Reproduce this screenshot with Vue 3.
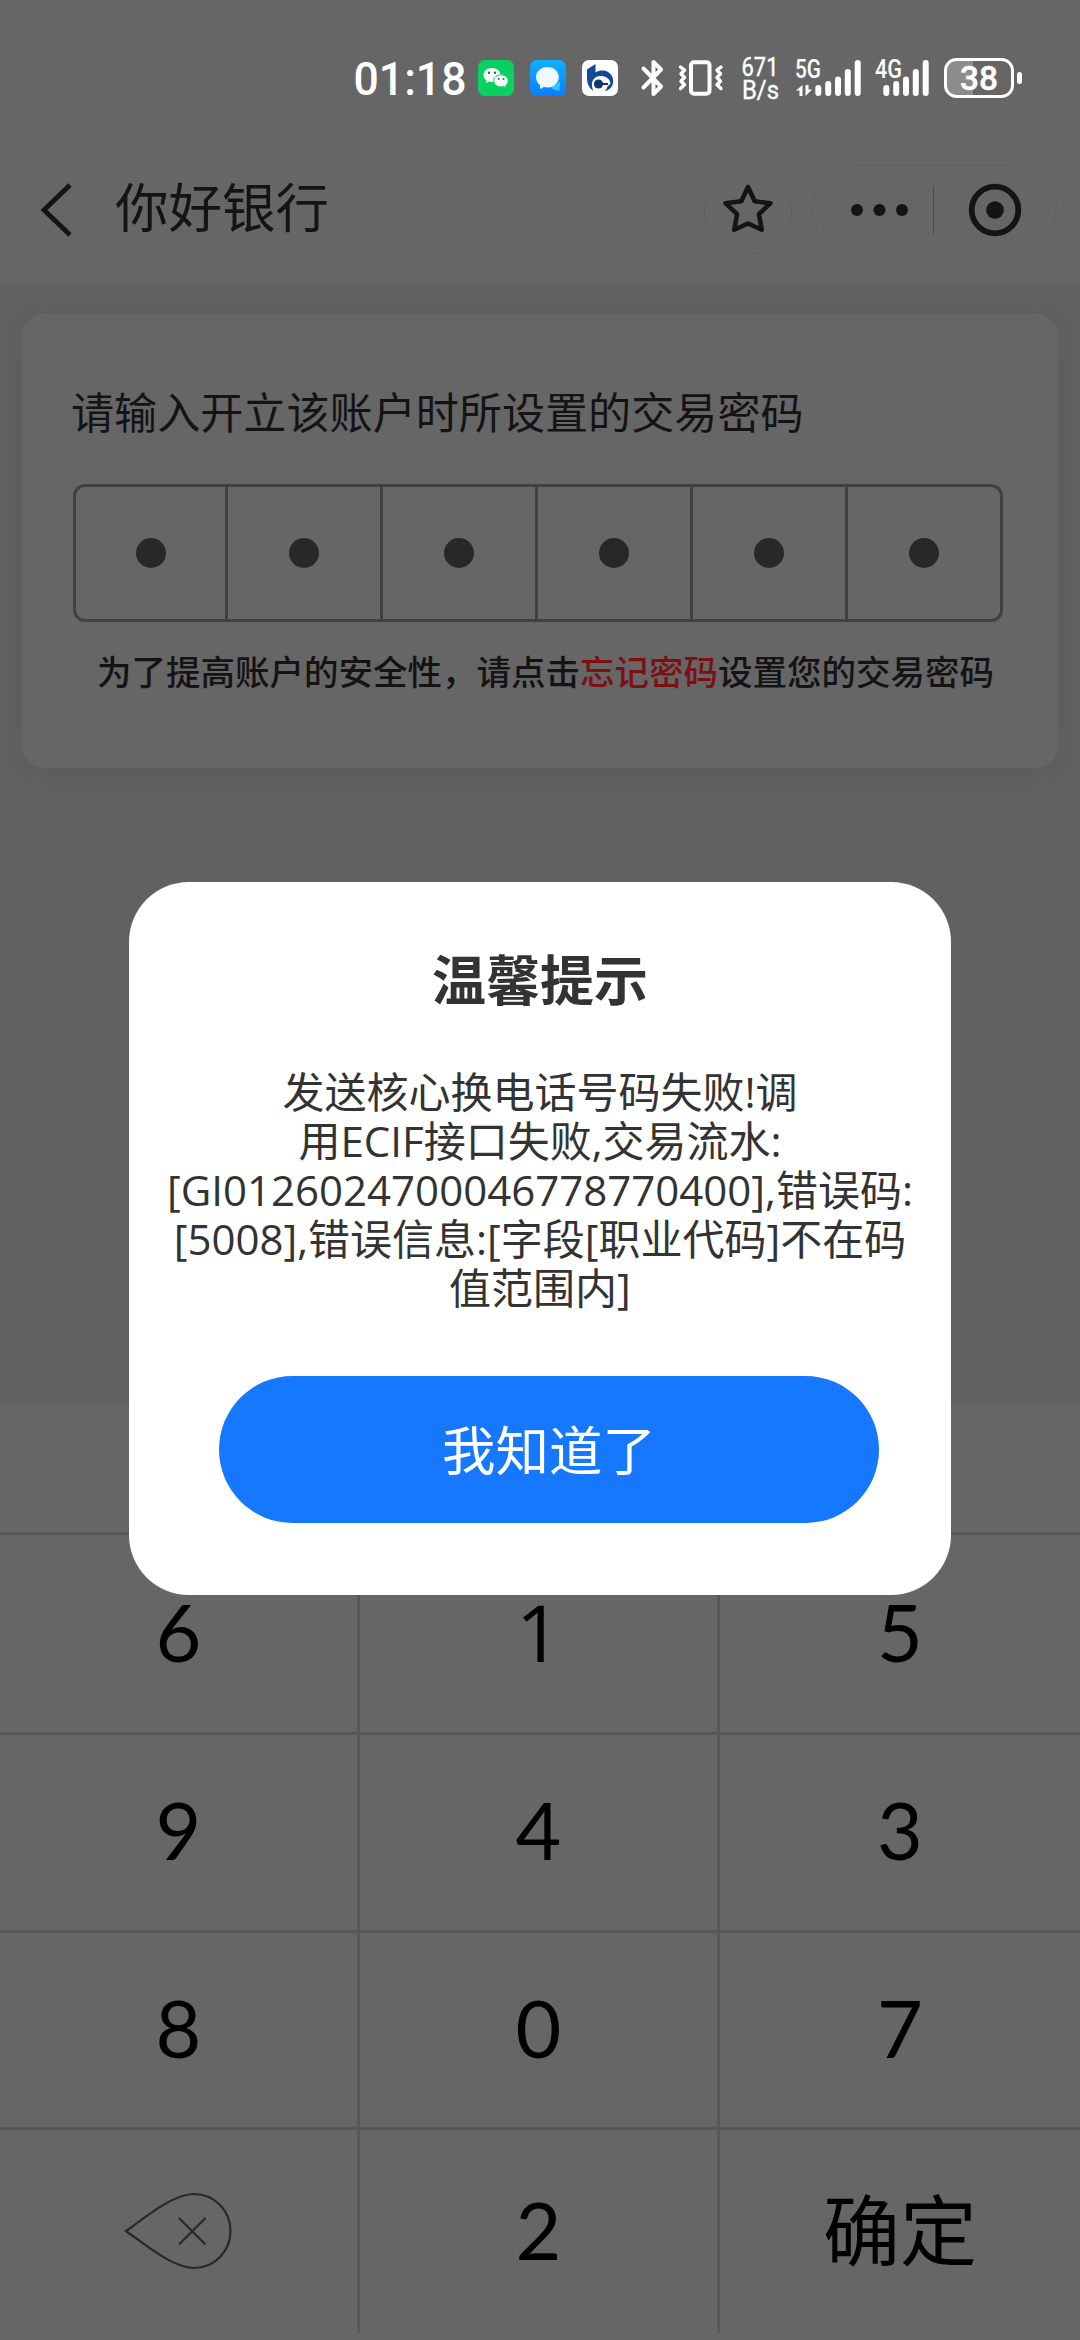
<script setup>
const cells = [1, 2, 3, 4, 5, 6]
const rows = [
  ['6', '1', '5'],
  ['9', '4', '3'],
  ['8', '0', '7'],
  ['del', '2', '确定'],
]
const bars = [
  { x: 0, h: 11 },
  { x: 9.9, h: 15 },
  { x: 19.7, h: 19.5 },
  { x: 29.5, h: 27 },
  { x: 39.4, h: 36 },
]
const message = [
  { id: 'l1', text: '发送核心换电话号码失败!调' },
  { id: 'l2', text: '用ECIF接口失败,交易流水:' },
  { id: 'l3', text: '[GI0126024700046778770400],错误码:' },
  { id: 'l4', text: '[5008],错误信息:[字段[职业代码]不在码' },
  { id: 'l5', text: '值范围内]' },
]
</script>

<template>
  <div class="screen">
    <header class="top">
      <div class="status">
        <svg class="clock" width="114" height="48" viewBox="0 0 114 48">
          <text x="0.500" y="41" textLength="113" lengthAdjust="spacingAndGlyphs">01:18</text>
        </svg>
        <svg class="app" width="36" height="36" viewBox="0 0 36 36">
          <rect width="36" height="36" rx="7" fill="#07d160" />
          <path d="M14 8c-4.900 0-8.500 3.100-8.500 7 0 2.200 1.200 4 3 5.300l-.7 2.700 3-1.500c1 .3 2 .5 3.200.5 4.800 0 8.500-3 8.500-7s-3.700-7-8.500-7z" fill="#fff" />
          <path d="M23 14.800c-4.200 0-7.300 2.700-7.300 6s3.100 6.100 7.300 6.100c1 0 1.900-.2 2.700-.4l2.700 1.400-.7-2.300c1.500-1.100 2.500-2.800 2.500-4.800 0-3.300-3-6-7.200-6z" fill="#fff" stroke="#07d160" stroke-width="1" />
          <circle cx="11" cy="12.800" r="1.200" fill="#087a3c" />
          <circle cx="17" cy="12.800" r="1.200" fill="#087a3c" />
          <circle cx="20.700" cy="19" r="1" fill="#087a3c" />
          <circle cx="25.500" cy="19" r="1" fill="#087a3c" />
        </svg>
        <svg class="app" width="36" height="36" viewBox="0 0 36 36">
          <defs>
            <linearGradient id="msg" x1="0" y1="0" x2="0" y2="1">
              <stop offset="0" stop-color="#0fb0ff" />
              <stop offset="1" stop-color="#0a7cff" />
            </linearGradient>
          </defs>
          <rect width="36" height="36" rx="7" fill="url(#msg)" />
          <path d="M20 26c5 0 8-2 9.500-5 1 3 .5 5 0 6v3.500c-3 .3-7-.5-9.500-4.500z" fill="#35c8ff" />
          <path d="M17.500 7C11 7 6 11.300 6 17.200c0 3.200 1.600 5.900 4 7.700V29l4-2c1.100.3 2.300.4 3.500.4 6.500 0 11.300-4.400 11.300-10.200S24 7 17.500 7z" fill="#eef8ff" />
        </svg>
        <svg class="app" width="36" height="36" viewBox="0 0 36 36">
          <rect width="36" height="36" rx="7" fill="#fff" />
          <path d="M5 9.500 13.500 4v8.500c4-2.500 9-2.500 12.500-.5 5 3 6.500 9 4 14-1.500 2.800-4 4.500-7 5 1-1 2-2.500 2.300-4.200l3.200-3.300c-.5-5-5-7.500-10-7.500-6 0-9 4.500-8.500 10 .2 2 .8 3.800 1.500 5C7 28 5 23.500 5 18z" fill="#124a9a" />
          <circle cx="16.500" cy="24" r="4.600" fill="#0d3778" />
          <path d="M17 24h9" stroke="#0d3778" stroke-width="2" />
        </svg>
        <svg class="bt" width="24" height="38" viewBox="0 0 24 38">
          <path d="M2.500 9.500 20 27.500 12.500 35V3L20 10.500 2.500 28.500" fill="none" stroke="#fff" stroke-width="4" stroke-linecap="round" stroke-linejoin="round" />
        </svg>
        <svg class="vibrate" width="46" height="36" viewBox="0 0 46 36">
          <rect x="13" y="2.200" width="18.500" height="31.600" rx="3" fill="none" stroke="#fff" stroke-width="4" />
          <path d="M2.500 7l4 3.200-3.500 3.600 3.500 3.700L3 21.200l3.500 3.600-4 3.700M43 7l-4 3.200 3.500 3.600-3.500 3.700 3.500 3.700-3.500 3.600 4 3.700" fill="none" stroke="#fff" stroke-width="3.400" stroke-linecap="round" stroke-linejoin="round" />
        </svg>
        <svg class="speed" width="40" height="46" viewBox="0 0 40 46">
          <text x="1.500" y="21" textLength="37" lengthAdjust="spacingAndGlyphs">671</text>
          <text x="2" y="44" textLength="37" lengthAdjust="spacingAndGlyphs">B/s</text>
        </svg>
        <svg class="signal five" width="68" height="38" viewBox="0 0 68 38">
          <text x="0" y="19" textLength="26" lengthAdjust="spacingAndGlyphs">5G</text>
          <path d="M1 31.500 7.500 26v11h-3v-5.500zM17 30.500 10.500 37V26h3v4.500z" fill="#fff" />
          <rect v-for="b in bars" :key="b.x" :x="20.300 + b.x" :y="37 - b.h" width="6" :height="b.h" rx="3" fill="#fff" />
        </svg>
        <svg class="signal four" width="56" height="38" viewBox="0 0 56 38">
          <text x="0" y="19" textLength="27" lengthAdjust="spacingAndGlyphs">4G</text>
          <rect v-for="b in bars" :key="b.x" :x="8.300 + b.x" :y="37 - b.h" width="6" :height="b.h" rx="3" fill="#fff" />
        </svg>
        <svg class="battery" width="80" height="40" viewBox="0 0 80 40">
          <path d="M12 3h17v34H12a9 9 0 0 1-9-9V12a9 9 0 0 1 9-9z" fill="#8c8c8c" />
          <rect x="1.500" y="1.500" width="67" height="37" rx="11" fill="none" stroke="#fff" stroke-width="3" />
          <rect x="73" y="14" width="5" height="12" rx="2.500" fill="#fff" />
          <text x="16" y="32" textLength="38" lengthAdjust="spacingAndGlyphs">38</text>
        </svg>
      </div>
      <nav class="nav">
        <svg class="back" width="34" height="56" viewBox="0 0 34 56">
          <path d="M31 3 5 28l26 25" fill="none" stroke="#141414" stroke-width="4.800" />
        </svg>
        <h1>你好银行</h1>
        <div class="star">
          <svg width="54" height="54" viewBox="0 0 54 54">
            <path d="M27 4l6.700 14.300 15.800 1.900-11.600 10.900 2.900 15.700L27 40.500l-13.800 6.300 2.900-15.700L4.500 20.200l15.800-1.900z" fill="none" stroke="#141414" stroke-width="4.500" stroke-linejoin="round" />
          </svg>
        </div>
        <div class="capsule">
          <svg class="more" width="60" height="16" viewBox="0 0 60 16">
            <circle cx="7" cy="8" r="6" />
            <circle cx="29.500" cy="8" r="6" />
            <circle cx="52" cy="8" r="6" />
          </svg>
          <i class="rule"></i>
          <svg class="target" width="54" height="54" viewBox="0 0 54 54">
            <circle cx="27" cy="27" r="23.300" fill="none" stroke="#141414" stroke-width="5.800" />
            <circle cx="27" cy="27" r="8.800" fill="#141414" />
          </svg>
        </div>
      </nav>
    </header>

    <main class="body">
      <section class="card">
        <p class="label">请输入开立该账户时所设置的交易密码</p>
        <div class="pin">
          <div v-for="c in cells" :key="c" class="cell"><i></i></div>
        </div>
        <p class="hint">为了提高账户的安全性，请点击<span>忘记密码</span>设置您的交易密码</p>
      </section>
    </main>

    <section class="keypad">
      <div class="bar"></div>
      <div v-for="(row, r) in rows" :key="r" class="row">
        <div v-for="k in row" :key="k" class="key">
          <svg v-if="k === 'del'" class="del" width="110" height="80" viewBox="0 0 110 80">
            <path d="M2 40C18 29 48 3 70 3a36.500 37 0 0 1 0 74C48 77 18 51 2 40z" fill="none" stroke="#282828" stroke-width="2.200" />
            <path d="M55 27l26.500 26.500M81.500 27 55 53.500" stroke="#282828" stroke-width="2.200" />
          </svg>
          <span v-else-if="k === '确定'" class="ok">{{ k }}</span>
          <span v-else class="digit" :class="{ one: k === '1' }">{{ k }}</span>
        </div>
      </div>
    </section>

    <div class="dialog">
      <h2>温馨提示</h2>
      <div class="message">
        <div v-for="l in message" :key="l.id"><span :class="l.id">{{ l.text }}</span></div>
      </div>
      <button>我知道了</button>
    </div>
  </div>
</template>

<style>
body { margin: 0; background: #666; }
</style>

<style scoped>
.screen {
  position: relative;
  width: 1080px;
  height: 2340px;
  overflow: hidden;
  display: flex;
  flex-direction: column;
  background: #616161;
  color: #141414;
  font-family: "Open Sans", "Noto Sans CJK SC", sans-serif;
}
svg { display: block; flex: none; overflow: visible; }
h1, h2, p { margin: 0; font-weight: 400; white-space: nowrap; }

.top { height: 283px; flex: none; background: #666; }
.status { height: 156px; display: flex; align-items: center; box-sizing: border-box; padding-left: 353px; }
.status text { fill: #fff; font-family: Roboto, sans-serif; font-weight: 500; }
.clock text { font-size: 47px; }
.app { margin-left: 16px; }
.clock + .app { margin-left: 11px; }
.bt { margin-left: 23px; }
.vibrate { margin-left: 13px; }
.speed { margin-left: 16px; }
.speed text { font-size: 25px; font-weight: 400; stroke: #fff; stroke-width: .4px; }
.signal text { font-size: 25px; }
.five { margin-left: 15px; }
.four { margin-left: 12px; }
.battery { margin-left: 13px; }
.battery text { font-size: 34px; font-weight: 500; stroke: #fff; stroke-width: .5px; }

.nav { height: 108px; display: flex; align-items: center; padding-left: 39px; }
.nav h1 { font-size: 53.500px; line-height: 80px; margin: -5px 0 0 42px; width: 216px; }
.star {
  width: 86px; height: 88px; margin-left: 373px; border: 1px solid #616161; border-radius: 46px;
  display: flex; align-items: center; justify-content: center;
}
.capsule {
  width: 243px; height: 88px; margin-left: 20px; border: 1px solid #616161; border-radius: 46px;
  display: flex; align-items: center;
}
.more { margin-left: 37px; fill: #141414; }
.rule { width: 1px; height: 48px; margin-left: 23px; background: #4a4a4a; }
.target { margin-left: 34px; }

.body { flex: none; height: 1121px; padding: 31px 22px 0; box-sizing: border-box; }
.card {
  height: 454px; width: 1036px; box-sizing: border-box; padding: 67px 0 0 51px;
  background: #666; border-radius: 22px; box-shadow: 0 4px 28px rgba(0, 0, 0, .06);
}
.label { font-size: 43.100px; line-height: 64px; margin-left: -2px; }
.pin {
  display: flex; width: 930px; height: 138px; box-sizing: border-box; margin-top: 39px;
  border: 3px solid #414141; border-radius: 12px;
}
.cell { width: 152px; display: flex; align-items: center; justify-content: center; border-right: 3px solid #414141; }
.cell:first-child { width: 149px; }
.cell:last-child { border-right: 0; }
.cell i { width: 30px; height: 30px; border-radius: 50%; background: #282828; }
.hint { margin: 25px 0 0 24px; font-size: 34.500px; line-height: 50px; font-weight: 500; }
.hint span { color: #7c1013; }

.keypad { flex: none; height: 936px; background: #666; color: #000; }
.bar { height: 128px; }
.row { display: flex; height: 194.500px; border-top: 3px solid #575757; }
.row:nth-child(2) { height: 197px; }
.row:last-child { height: 203px; }
.key { flex: none; width: 357px; display: flex; align-items: center; justify-content: center; border-right: 3px solid #575757; }
.key:last-child { border-right: 0; width: 360px; }
.digit { font-family: Lato, sans-serif; font-size: 79px; line-height: 100px; margin-top: -4px; }
.one { font-family: "Open Sans", sans-serif; }
.del { margin-top: -1px; }
.ok { font-size: 77px; line-height: 100px; margin-top: -9px; font-family: "Noto Sans CJK SC", sans-serif; }

.dialog {
  position: absolute; left: 129px; top: 882px; width: 822px; height: 713px; box-sizing: border-box;
  border-radius: 60px; background: #fff; color: #333; display: flex; flex-direction: column; align-items: center;
}
h2 { font-size: 54px; line-height: 80px; font-weight: 700; margin-top: 58px; }
.message { margin-top: 47px; font-size: 42px; line-height: 49px; text-align: center; white-space: nowrap; }
button {
  width: 660px; height: 147px; border: 0; border-radius: 74px; margin: 64px 0 0 18px; padding: 0 0 4px;
  background: #1677ff; color: #fff; font: 400 53.500px/1 "Noto Sans CJK SC", sans-serif;
}
</style>
